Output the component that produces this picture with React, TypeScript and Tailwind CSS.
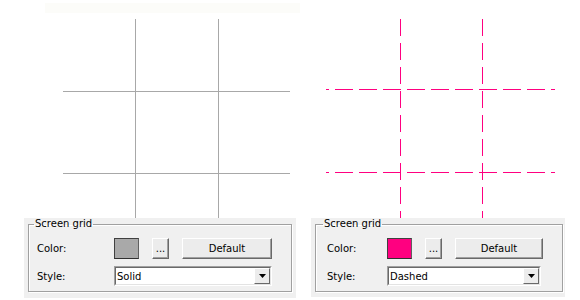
import React from 'react';

const FONT = "font-['DejaVu_Sans',_'Liberation_Sans',_sans-serif]";

function Swatch({ color }: { color: string }) {
  return (
    <div
      className="w-[25px] h-[21px] border border-t-[#404040] border-l-[#404040] border-r-[#606060] border-b-[#303030]"
      style={{ backgroundColor: color }}
    />
  );
}

function Btn({ label, w }: { label: string; w: string }) {
  return (
    <div
      className={`${w} h-[21px] flex items-center justify-center bg-[#ececec] border border-t-white border-l-white border-r-[#696969] border-b-[#696969] shadow-[inset_-1px_-1px_0_#a0a0a0] text-[10px] text-black leading-none`}
    >
      {label}
    </div>
  );
}

function Select({ value, w }: { value: string; w: string }) {
  return (
    <div
      className={`${w} h-[20px] flex bg-white border border-t-[#a0a0a0] border-l-[#a0a0a0] border-r-white border-b-white`}
    >
      <div className="flex-1 flex items-center border border-t-[#696969] border-l-[#696969] border-r-[#e3e3e3] border-b-[#e3e3e3] pl-[1px] text-[10px] text-black">
        {value}
        <div className="ml-auto w-[16px] h-full flex items-center justify-center bg-[#ececec] border border-t-white border-l-white border-r-[#696969] border-b-[#696969]">
          <svg width="7" height="4" viewBox="0 0 7 4">
            <polygon points="0,0 7,0 3.5,4" fill="#000" />
          </svg>
        </div>
      </div>
    </div>
  );
}

function GridBox({
  color,
  style,
  labelW,
  pl,
  legendMl,
  btnGap,
  defaultW,
  selectW,
}: {
  color: string;
  style: string;
  labelW: string;
  pl: string;
  legendMl: string;
  btnGap: string;
  defaultW: string;
  selectW: string;
}) {
  return (
    <fieldset className="w-full border border-[#a0a0a0] shadow-[1px_1px_0_#fff,inset_1px_1px_0_#fff] pb-[5px]">
      <legend className={`${legendMl} px-[1px] text-[10px] leading-[12px] text-black`}>Screen grid</legend>
      <div className={`${pl} pt-[8px] flex flex-col gap-[7px] text-[10px] text-black`}>
        <div className="flex items-center">
          <span className={labelW}>Color:</span>
          <Swatch color={color} />
          <div className={`${btnGap} flex`}>
            <Btn label="..." w="w-[17px]" />
          </div>
          <div className={btnGap.replace('ml', 'ml')}>
            <Btn label="Default" w={defaultW} />
          </div>
        </div>
        <div className="flex items-center">
          <span className={labelW}>Style:</span>
          <Select value={style} w={selectW} />
        </div>
      </div>
    </fieldset>
  );
}

export default function App() {
  return (
    <div className={`w-[580px] h-[300px] bg-white flex overflow-hidden ${FONT}`}>
      {/* solid grid preview */}
      <div className="w-[300px] flex flex-col">
        <svg width="300" height="218" className="block">
          <rect x="45" y="3" width="255" height="10" fill="#fcfcf9" />
          <g stroke="#a8a8a8" strokeWidth="1">
            <line x1="135.5" y1="19" x2="135.5" y2="218" />
            <line x1="218.5" y1="19" x2="218.5" y2="218" />
            <line x1="63" y1="91.5" x2="290" y2="91.5" />
            <line x1="63" y1="173.5" x2="290" y2="173.5" />
          </g>
        </svg>
        <div className="ml-[24px] w-[272px] h-[80px] bg-[#f0f0f0] pl-[4px] pr-[4px]">
          <GridBox
            color="#a9a9a9"
            style="Solid"
            labelW="w-[77px]"
            pl="pl-[8px]"
            legendMl="ml-[5px]"
            btnGap="ml-[13px]"
            defaultW="w-[90px]"
            selectW="w-[158px]"
          />
        </div>
      </div>

      {/* dashed grid preview */}
      <div className="w-[280px] flex flex-col">
        <svg width="280" height="218" className="block">
          <g stroke="#ff0080" strokeWidth="1">
            <line x1="100.5" y1="19" x2="100.5" y2="218" strokeDasharray="17 7" />
            <line x1="182.5" y1="19" x2="182.5" y2="218" strokeDasharray="17 7" />
            <line x1="26" y1="89.5" x2="255" y2="89.5" strokeDasharray="18 6" strokeDashoffset="15" />
            <line x1="26" y1="172.5" x2="255" y2="172.5" strokeDasharray="18 6" strokeDashoffset="15" />
          </g>
        </svg>
        <div className="ml-[11px] w-[254px] h-[79px] bg-[#f0f0f0] pl-[4px] pr-[2px]">
          <GridBox
            color="#ff0080"
            style="Dashed"
            labelW="w-[60px]"
            pl="pl-[11px]"
            legendMl="ml-[7px]"
            btnGap="ml-[13px]"
            defaultW="w-[88px]"
            selectW="w-[154px]"
          />
        </div>
      </div>
    </div>
  );
}
